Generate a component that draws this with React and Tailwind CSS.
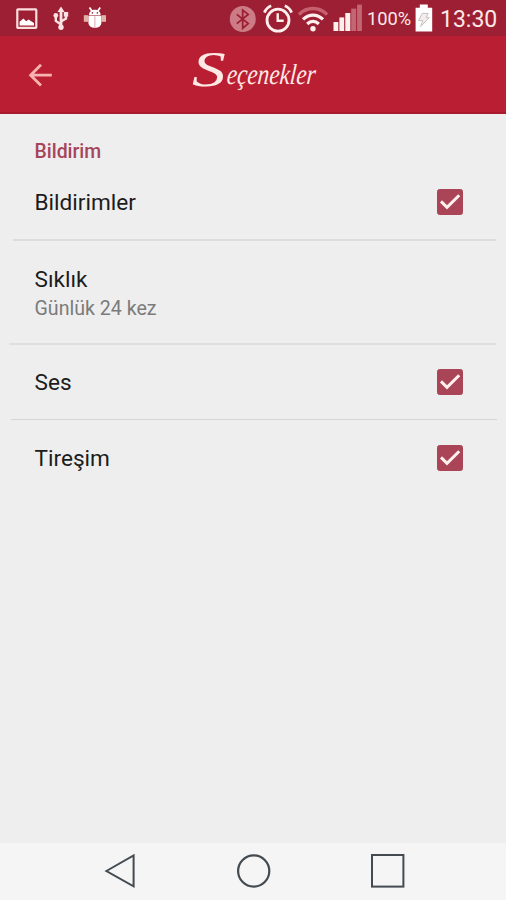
import React, { useState } from "react";

const StatusBar = () => {
  return (
    <div className="h-9 bg-[#9c1f33] flex items-center text-[#fde8e8]">
      <svg className="w-[22px] h-[22px] ml-4 mt-px" viewBox="0 0 22 22" fill="none">
        <rect x="1.3" y="1.3" width="19" height="18.6" rx="0.6" stroke="#fbdede" strokeWidth="2.2" />
        <path d="M3.6 17.4v-3.6l3.8-3.4 2.8 2.8 2.4-1.6 1.8 1.2 3.6 2.2v2.4z" fill="#fff" />
      </svg>
      <svg className="w-[18px] h-[26px] ml-[14px]" viewBox="0 0 18 26" fill="none" stroke="#fbe3e3">
        <path d="M9 5v17" strokeWidth="2.8" />
        <path d="M9 19.5l-5.2-3.6v-4.4M9 16.5l5-3V9" strokeWidth="2.4" />
        <path d="M5.4 7L9 1.5l3.6 5.5z" fill="#fbe3e3" stroke="none" />
        <circle cx="3.8" cy="10.5" r="2.4" fill="#fbe3e3" stroke="none" />
        <rect x="11.8" y="7" width="4.4" height="4.6" fill="#fbe3e3" stroke="none" />
        <circle cx="9" cy="22.3" r="2.7" fill="#fbe3e3" stroke="none" />
      </svg>
      <svg className="w-[24px] h-[24px] ml-[13px]" viewBox="0 0 24 24">
        <path d="M6.5 1.6l2.4 3.4M17.2 1.6l-2.4 3.4" stroke="#fff" strokeWidth="1.8" />
        <path d="M6 9.2C6 5.8 8.4 3.8 11.8 3.8s5.8 2 5.8 5.4z" fill="#fff" />
        <rect x="0.8" y="9.2" width="4.4" height="6.6" fill="#e4b3a8" />
        <rect x="18.6" y="9.2" width="4.4" height="6.6" fill="#e4b3a8" />
        <path d="M5.4 9.8h13v6.4c0 3.6-2.6 5.6-6.5 5.6s-6.5-2-6.5-5.6z" fill="#fff" />
        <path d="M11.9 10.2v11" stroke="#dba5aa" strokeWidth="1" />
        <circle cx="9.4" cy="6.9" r="0.8" fill="#9c1f33" />
        <circle cx="14.4" cy="6.9" r="0.8" fill="#9c1f33" />
      </svg>

      <svg className="w-[28px] h-[28px] ml-[122px] mt-px" viewBox="0 0 28 28" fill="none">
        <circle cx="13.8" cy="14" r="13" fill="#cd7c87" />
        <path d="M7.8 9.4l11.4 9.2-5.5 4.6V5l5.5 4.4L7.8 18.6" stroke="#9c1f33" strokeWidth="1.8" />
      </svg>
      <svg className="w-[30px] h-[30px] ml-[6px] mt-px" viewBox="0 0 30 30" fill="none" stroke="#fff0ee">
        <circle cx="15" cy="16.2" r="11" strokeWidth="2.8" />
        <path d="M1.4 8.6C2.8 5.4 5.2 3 8.2 1.8M28.6 8.6C27.2 5.4 24.8 3 21.8 1.8" strokeWidth="2.8" />
        <path d="M14.7 9.2v7.6h6" strokeWidth="2.4" />
      </svg>
      <svg className="w-[30px] h-[28px] ml-[5px] mt-[2px]" viewBox="0 0 30 28" fill="none">
        <path d="M1 9.6C8.8 1.5 21.2 1.5 29 9.6" stroke="#c7606e" strokeWidth="3.4" />
        <path d="M5 14.4c5.8-5.8 14.2-5.8 20 0" stroke="#fff0ee" strokeWidth="3.2" />
        <path d="M9.2 19c3.4-3.4 8.2-3.4 11.6 0" stroke="#fff0ee" strokeWidth="3.2" />
        <circle cx="15" cy="23.8" r="2.7" fill="#fff0ee" />
      </svg>
      <svg className="w-[30px] h-[28px] ml-[5px]" viewBox="0 0 30 28">
        <rect x="0.5" y="18" width="4.8" height="9" fill="#fff0ee" />
        <rect x="6.4" y="13.4" width="4.8" height="13.6" fill="#fff0ee" />
        <rect x="12.3" y="9" width="5" height="18" fill="#fff0ee" />
        <rect x="18.2" y="4.6" width="5" height="22.4" fill="#c26673" />
        <rect x="24.1" y="0.6" width="4.8" height="26.4" fill="#c26673" />
      </svg>
      <span className="ml-[4px] w-[45px] text-[18.3px] leading-9 mt-[2px] whitespace-nowrap">100%</span>
      <svg className="w-[18px] h-[28px] ml-[3px]" viewBox="0 0 18 28">
        <path d="M4.8 0.6h8v3.2h4.4V27.4H0.6V3.8h4.2z" fill="#fff" />
        <path d="M7.2 9.4h6l-2 4.2h3L5.6 22.6l2.2-6H3.6z" fill="#f3eeee" stroke="#c9bfc0" strokeWidth="1" />
      </svg>
      <span className="ml-[7px] text-[23px] leading-9 mt-[3px] whitespace-nowrap">13:30</span>
    </div>
  );
};

const Header = () => {
  return (
    <header className="h-[78px] bg-[#ba1e33] border-b-2 border-[#a91a2f] flex items-center">
      <button className="ml-7 mt-[2px] w-6 h-[26px]">
        <svg className="w-6 h-[26px]" viewBox="0 0 24 26" fill="none" stroke="#f7b3b0" strokeWidth="2.8">
          <path d="M13 2.8L2.6 13.2 13 23.6M2.8 13.2h21" />
        </svg>
      </button>
      <h1 className="ml-[140px] -mt-[7px] flex items-baseline font-['Liberation_Serif',serif] italic text-[#ffe9e4] whitespace-nowrap">
        <span className="inline-block text-[50px] leading-[60px] w-[35px] origin-left translate-y-[2px] scale-x-[1.35]">S</span>
        <span className="inline-block text-[29px] leading-[60px] -skew-x-6 origin-left scale-x-[0.8]">eçenekler</span>
      </h1>
    </header>
  );
};

const CheckBox = ({ checked }) => {
  return (
    <svg className="w-[26px] h-[26px]" viewBox="0 0 26 26" fill="none">
      <rect x="0.5" y="0.5" width="25" height="25" rx="2" fill={checked ? "#aa4457" : "none"} stroke="#aa4457" />
      {checked && <path d="M4 12.4l6 6L22.2 6.2" stroke="#fff1ed" strokeWidth="3" />}
    </svg>
  );
};

const Row = ({ title, checked, onClick }) => {
  return (
    <div onClick={onClick} className="h-[75px] pl-[34.5px] pr-[43px] flex items-center justify-between cursor-pointer">
      <span className="pt-[3px] text-[22.6px] leading-7 text-[#1c1c1c]">{title}</span>
      <CheckBox checked={checked} />
    </div>
  );
};

const App = () => {
  const [settings, setSettings] = useState({ notifications: true, sound: true, vibration: true });

  const toggle = (key) => setSettings({ ...settings, [key]: !settings[key] });

  return (
    <div className="w-[506px] h-[900px] flex flex-col overflow-hidden bg-[#eeeeee] font-[Roboto,sans-serif]">
      <StatusBar />
      <Header />

      <main className="flex-1">
        <h2 className="pt-[25px] pl-[34.5px] text-[19.4px] leading-[25px] font-medium text-[#a8445a]">Bildirim</h2>
        <Row title="Bildirimler" checked={settings.notifications} onClick={() => toggle("notifications")} />
        <div className="h-[2px] ml-[13px] mr-[10px] bg-[#dcdcdc]" />
        <div className="h-[102px] pl-[34.5px] pt-6">
          <p className="text-[22.6px] leading-[30px] text-[#1c1c1c]">Sıklık</p>
          <p className="text-[19.6px] leading-[28px] text-[#7b7b7b]">Günlük 24 kez</p>
        </div>
        <div className="h-[2px] ml-[9px] mr-[10px] bg-[#dfdfdf]" />
        <div className="-mt-px">
          <Row title="Ses" checked={settings.sound} onClick={() => toggle("sound")} />
        </div>
        <div className="h-px ml-[11px] mr-[9px] bg-[#d5d5d5]" />
        <Row title="Tireşim" checked={settings.vibration} onClick={() => toggle("vibration")} />
      </main>

      <nav className="h-[57px] pb-[2px] bg-[#f5f5f5] flex items-center">
        <svg className="ml-[104px] w-[32px] h-[36px]" viewBox="0 0 32 36" fill="none" stroke="#434a50" strokeWidth="2">
          <path d="M2.4 18L29.6 2.4v31z" />
        </svg>
        <svg className="ml-[100px] w-[36px] h-[36px]" viewBox="0 0 36 36" fill="none" stroke="#434a50" strokeWidth="2.2">
          <circle cx="17.7" cy="18" r="15.6" />
        </svg>
        <svg className="ml-[98px] w-[36px] h-[36px]" viewBox="0 0 36 36" fill="none" stroke="#434a50" strokeWidth="2">
          <rect x="2" y="2" width="31.4" height="31.6" />
        </svg>
      </nav>
    </div>
  );
};

export default App;
